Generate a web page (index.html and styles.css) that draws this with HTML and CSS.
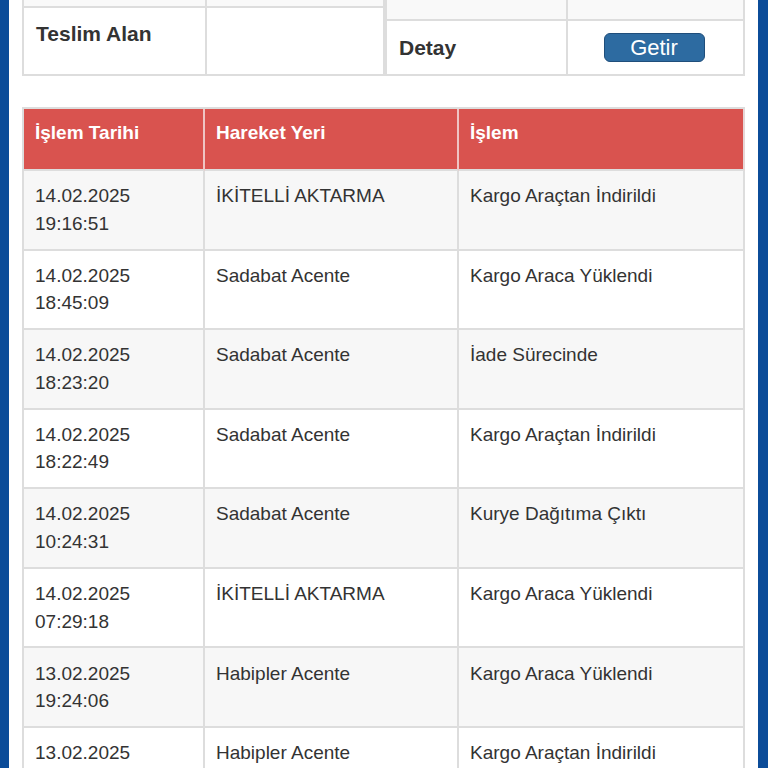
FILE: index.html
```html
<!DOCTYPE html>
<html lang="tr">
<head>
<meta charset="utf-8">
<title>Kargo Takip</title>
<link rel="stylesheet" href="styles.css">
</head>
<body>
<div class="page">
  <div class="info">
    <table class="info-table info-left">
      <tr class="hidden-row"><td><div class="h1"></div></td><td><div class="h1"></div></td></tr>
      <tr><td class="label label-top">Teslim Alan</td><td class="value-top"></td></tr>
    </table>
    <table class="info-table info-right">
      <tr class="hidden-row"><td><div class="h2"></div></td><td><div class="h2"></div></td></tr>
      <tr><td class="label label-mid">Detay</td><td class="btn-cell"><button class="btn" type="button">Getir</button></td></tr>
    </table>
  </div>

  <table class="moves">
    <colgroup>
      <col class="c1"><col class="c2"><col class="c3">
    </colgroup>
    <thead>
      <tr><th>İşlem Tarihi</th><th>Hareket Yeri</th><th>İşlem</th></tr>
    </thead>
    <tbody>
      <tr><td>14.02.2025<br>19:16:51</td><td>İKİTELLİ AKTARMA</td><td>Kargo Araçtan İndirildi</td></tr>
      <tr><td>14.02.2025<br>18:45:09</td><td>Sadabat Acente</td><td>Kargo Araca Yüklendi</td></tr>
      <tr><td>14.02.2025<br>18:23:20</td><td>Sadabat Acente</td><td>İade Sürecinde</td></tr>
      <tr><td>14.02.2025<br>18:22:49</td><td>Sadabat Acente</td><td>Kargo Araçtan İndirildi</td></tr>
      <tr><td>14.02.2025<br>10:24:31</td><td>Sadabat Acente</td><td>Kurye Dağıtıma Çıktı</td></tr>
      <tr><td>14.02.2025<br>07:29:18</td><td>İKİTELLİ AKTARMA</td><td>Kargo Araca Yüklendi</td></tr>
      <tr><td>13.02.2025<br>19:24:06</td><td>Habipler Acente</td><td>Kargo Araca Yüklendi</td></tr>
      <tr><td>13.02.2025<br>18:02:11</td><td>Habipler Acente</td><td>Kargo Araçtan İndirildi</td></tr>
    </tbody>
  </table>
</div>
</body>
</html>
```

FILE: styles.css
```css
html, body {
  margin: 0;
  padding: 0;
  background: #ffffff;
}

body {
  font-family: "Liberation Sans", Arial, Helvetica, sans-serif;
  font-size: 19px;
  color: #333333;
  overflow: hidden;
}

.page {
  border-left: 9px solid #0b4c99;
  border-right: 10px solid #0b4c99;
  padding: 0 13px 40px;
  min-height: 900px;
}

/* top info tables */
.info {
  display: grid;
  grid-template-columns: 363fr 360fr;
  align-items: start;
  margin-top: -40px;
}

.info-table {
  width: 100%;
  border-collapse: separate;
  border-spacing: 0;
  border-top: 2px solid #dddddd;
  border-left: 2px solid #dddddd;
  table-layout: fixed;
}

.info-table td {
  border-right: 2px solid #dddddd;
  border-bottom: 2px solid #dddddd;
  padding: 0 12px;
  line-height: 27.6px;
}

.info-left td:first-child { width: 50%; }
.info-right td:first-child { width: 50%; }

.info-table .hidden-row td {
  background: #f9f9f9;
  padding: 0;
}

.h1 { height: 44px; }
.h2 { height: 57px; }

.info-table .label {
  font-weight: bold;
  font-size: 21px;
}

.info-table .label-top,
.info-table .value-top {
  vertical-align: top;
  padding: 11.5px 12px 26.9px;
}

.info-table .label-mid {
  vertical-align: middle;
  height: 53px;
  padding: 0 12px;
}

.info-table .btn-cell {
  text-align: center;
  vertical-align: middle;
  padding: 0 12px;
}

.btn {
  display: inline-block;
  width: 101px;
  height: 29px;
  margin-left: -3px;
  padding: 0;
  background: #2d6ba1;
  border: 1px solid #1f4e7b;
  border-radius: 6px;
  color: #ffffff;
  font-family: "Liberation Sans", Arial, Helvetica, sans-serif;
  font-size: 22px;
  line-height: 27px;
  vertical-align: middle;
}

/* movement table */
.moves {
  width: 100%;
  margin-top: 31px;
  border-collapse: separate;
  border-spacing: 0;
  border-top: 2px solid #dddddd;
  border-left: 2px solid #dddddd;
  table-layout: fixed;
}

.c1 { width: 181px; }
.c2 { width: 254px; }
.c3 { width: auto; }

.moves th {
  background: #d9534f;
  color: #ffffff;
  font-weight: bold;
  text-align: left;
  vertical-align: top;
  line-height: 27.6px;
  padding: 10.2px 11px 22.2px;
  border-right: 2px solid #efc4c3;
  border-bottom: 2px solid #dddddd;
}

.moves th:last-child {
  border-right-color: #e6d6d6;
}

.moves td {
  vertical-align: top;
  line-height: 27.6px;
  padding: 11.2px 11px 11.2px;
  border-right: 2px solid #dddddd;
  border-bottom: 2px solid #dddddd;
  background: #ffffff;
}

.moves tbody tr:nth-child(odd) td {
  background: #f7f7f7;
}
```
